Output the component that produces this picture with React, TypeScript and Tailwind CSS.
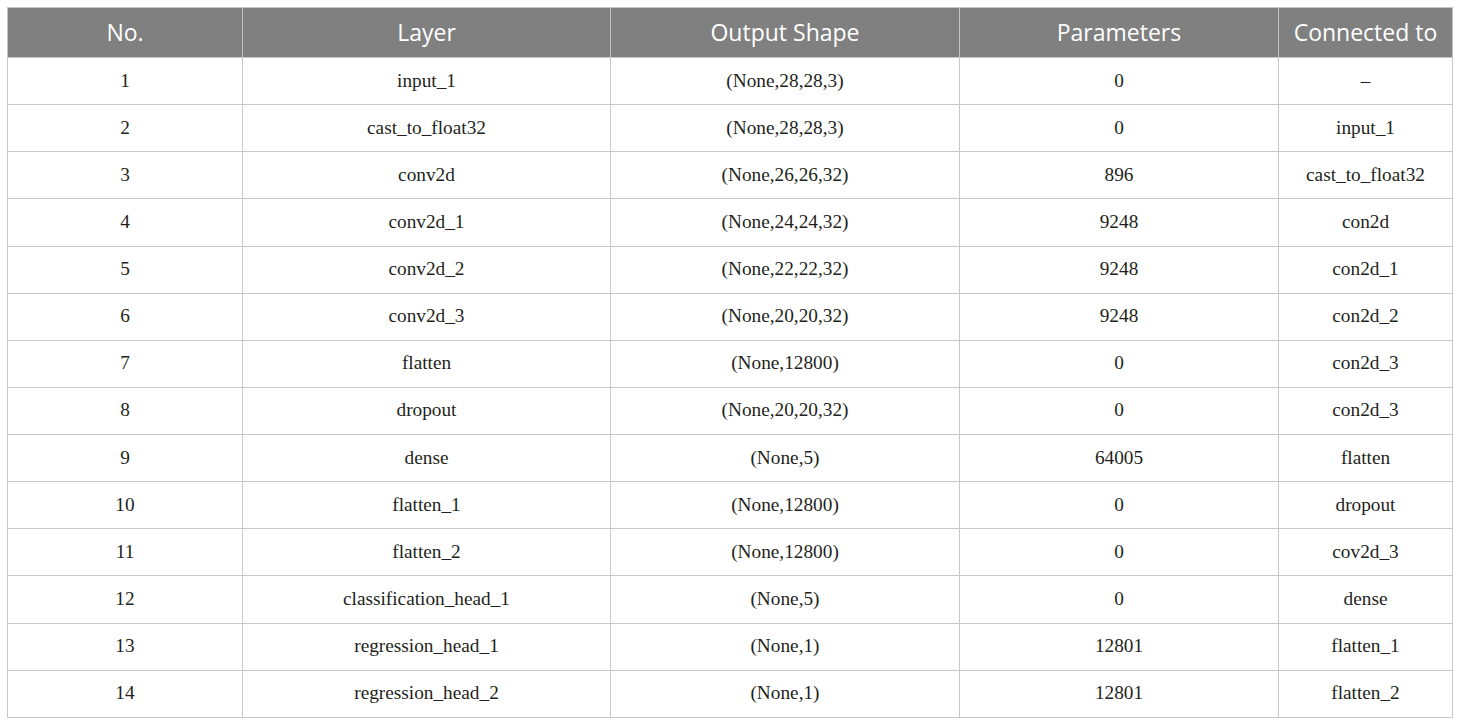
const rows: [string, string, string, string, string][] = [
  ["1", "input_1", "(None,28,28,3)", "0", "–"],
  ["2", "cast_to_float32", "(None,28,28,3)", "0", "input_1"],
  ["3", "conv2d", "(None,26,26,32)", "896", "cast_to_float32"],
  ["4", "conv2d_1", "(None,24,24,32)", "9248", "con2d"],
  ["5", "conv2d_2", "(None,22,22,32)", "9248", "con2d_1"],
  ["6", "conv2d_3", "(None,20,20,32)", "9248", "con2d_2"],
  ["7", "flatten", "(None,12800)", "0", "con2d_3"],
  ["8", "dropout", "(None,20,20,32)", "0", "con2d_3"],
  ["9", "dense", "(None,5)", "64005", "flatten"],
  ["10", "flatten_1", "(None,12800)", "0", "dropout"],
  ["11", "flatten_2", "(None,12800)", "0", "cov2d_3"],
  ["12", "classification_head_1", "(None,5)", "0", "dense"],
  ["13", "regression_head_1", "(None,1)", "12801", "flatten_1"],
  ["14", "regression_head_2", "(None,1)", "12801", "flatten_2"],
];

const headers = ["No.", "Layer", "Output Shape", "Parameters", "Connected to"];

export default function App() {
  return (
    <div className="w-[1460px] h-[724px] bg-white pt-[7px] pl-[7px]">
      <table className="table-fixed border-collapse w-[1445px]">
        <colgroup>
          <col className="w-[235px]" />
          <col className="w-[368px]" />
          <col className="w-[349px]" />
          <col className="w-[319px]" />
          <col className="w-[174px]" />
        </colgroup>
        <thead>
          <tr className="h-[50px] bg-[#808080]">
            {headers.map((h) => (
              <th
                key={h}
                className="border border-[#c4c4c4] p-0 text-center font-normal text-white text-[23px] whitespace-nowrap"
                style={{ fontFamily: '"Open Sans", sans-serif' }}
              >
                {h}
              </th>
            ))}
          </tr>
        </thead>
        <tbody>
          {rows.map((r) => (
            <tr key={r[0]} className="h-[47.14px]">
              {r.map((c, i) => (
                <td
                  key={i}
                  className="border border-[#c8c8c8] p-0 text-center text-[19.3px] text-[#231f20] whitespace-nowrap"
                  style={{ fontFamily: '"Liberation Serif", serif' }}
                >
                  {c}
                </td>
              ))}
            </tr>
          ))}
        </tbody>
      </table>
    </div>
  );
}
